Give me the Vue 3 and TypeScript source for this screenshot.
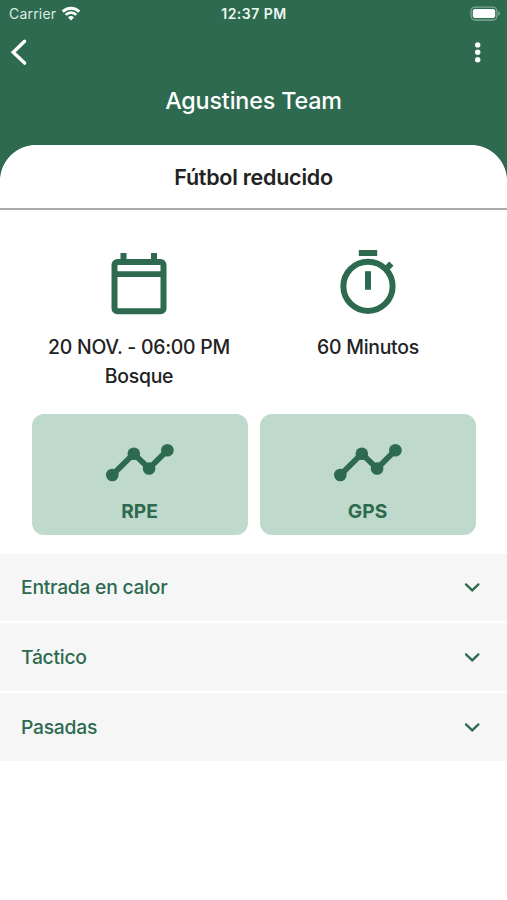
<script setup lang="ts">
import { ref } from 'vue'

interface Metric {
  id: string
  label: string
}

interface Section {
  id: string
  title: string
}

const metrics: Metric[] = [
  { id: 'rpe', label: 'RPE' },
  { id: 'gps', label: 'GPS' },
]

const sections: Section[] = [
  { id: 'warmup', title: 'Entrada en calor' },
  { id: 'tactics', title: 'Táctico' },
  { id: 'runs', title: 'Pasadas' },
]

const selected = ref<string | null>(null)
</script>

<template>
  <div class="screen">
    <header class="header">
      <div class="status">
        <div class="carrier">
          <span class="carrier-name">Carrier</span>
          <svg class="wifi" width="20" height="16" viewBox="61 5.5 20 16">
            <path d="M62.7 11.1a11.8 11.8 0 0 1 16.6 0" fill="none" stroke="#fff" stroke-width="2.9" />
            <path d="M65.7 14.4a7.5 7.5 0 0 1 10.6 0" fill="none" stroke="#fff" stroke-width="2.7" />
            <path d="M71 20l-3-3.1a4.3 4.3 0 0 1 6 0z" fill="#fff" />
          </svg>
        </div>
        <span class="clock">12:37 PM</span>
        <svg class="battery" width="32" height="16" viewBox="470 5.5 32 16">
          <rect x="471" y="6.7" width="26" height="12.8" rx="4" fill="none" stroke="#7fa892" stroke-width="1.3" />
          <rect x="472.8" y="8.6" width="22.4" height="9" rx="2" fill="#fff" />
          <path d="M498.4 10.8c2.2.7 2.2 3.8 0 4.5z" fill="#7fa892" />
        </svg>
      </div>
      <nav class="nav">
        <button class="icon-button" aria-label="Volver">
          <svg width="20" height="30" viewBox="9 37 20 30">
            <path d="M24.6 41.2L13.2 52.3l11.4 10.8" fill="none" stroke="#fff" stroke-width="3.4" stroke-linecap="round" />
          </svg>
        </button>
        <button class="icon-button" aria-label="Opciones">
          <svg width="8" height="24" viewBox="0 0 8 24">
            <circle cx="3.7" cy="4.9" r="2.7" fill="#fff" />
            <circle cx="3.7" cy="12.3" r="2.7" fill="#fff" />
            <circle cx="3.7" cy="19.7" r="2.7" fill="#fff" />
          </svg>
        </button>
      </nav>
      <h1 class="team">Agustines Team</h1>
      <div class="sheet-top">
        <h2 class="session">Fútbol reducido</h2>
      </div>
    </header>

    <section class="details">
      <div class="detail">
        <svg width="70" height="70" viewBox="104.5 248 70 70">
          <path d="M121 253h6v8h-6zM151.5 253h6v8h-6z" fill="#2d6a4f" />
          <rect x="115" y="262" width="49" height="49.2" rx="2.8" fill="none" stroke="#2d6a4f" stroke-width="6" />
          <path d="M115 274.2h49" stroke="#2d6a4f" stroke-width="5.8" />
        </svg>
        <span class="line">20 NOV. - 06:00 PM</span>
        <span class="line">Bosque</span>
      </div>
      <div class="detail">
        <svg width="70" height="70" viewBox="333 248 70 70">
          <circle cx="368" cy="286.3" r="24.6" fill="none" stroke="#2d6a4f" stroke-width="6" />
          <path d="M358.8 250h18.4v6h-18.4zM365 271.2h6v18.5h-6z" fill="#2d6a4f" />
          <path d="M384.8 270.2l6.6-6.6" stroke="#2d6a4f" stroke-width="6" />
        </svg>
        <span class="line">60 Minutos</span>
      </div>
    </section>

    <section class="metrics">
      <button v-for="metric in metrics" :key="metric.id" class="metric">
        <svg width="70" height="40" viewBox="104.9 443 70 40">
          <path d="M112.2 475l21.5-21.3L149 468.5l18.3-18.2" fill="none" stroke="#2d6a4f" stroke-width="5.8" />
          <g fill="#2d6a4f">
            <circle cx="112.2" cy="475" r="6.3" />
            <circle cx="133.7" cy="453.7" r="6.3" />
            <circle cx="149" cy="468.5" r="6.3" />
            <circle cx="167.3" cy="450.3" r="6.3" />
          </g>
        </svg>
        <span class="metric-label">{{ metric.label }}</span>
      </button>
    </section>

    <section class="accordion">
      <button
        v-for="section in sections"
        :key="section.id"
        class="row"
        :aria-expanded="selected === section.id"
        @click="selected = selected === section.id ? null : section.id"
      >
        <span class="row-title">{{ section.title }}</span>
        <svg width="18" height="14" viewBox="0 0 18 14">
          <path d="M3 4.4L9.2 10.4l6.2-6" fill="none" stroke="#2d6a4f" stroke-width="2.3" stroke-linecap="round" />
        </svg>
      </button>
    </section>
  </div>
</template>

<style>
body {
  margin: 0;
  background: #fff;
}
</style>

<style scoped>
.screen {
  width: 507px;
  height: 900px;
  overflow: hidden;
  background: #fff;
  color: #222;
  font-family: Inter, Roboto, sans-serif;
}

svg {
  display: block;
  flex: none;
}

button {
  border: 0;
  padding: 0;
  margin: 0;
  background: none;
  font: inherit;
  color: inherit;
}

.header {
  background: #2d6a4f;
  color: #fff;
}

.status {
  display: grid;
  grid-template-columns: 1fr auto 1fr;
  align-items: center;
  height: 27px;
  padding: 0 5px 0 9px;
  box-sizing: border-box;
}

.carrier {
  display: flex;
  align-items: center;
  gap: 5px;
  font-size: 14px;
  letter-spacing: 0.2px;
  color: #dcebe3;
}

.clock {
  margin-right: 3px;
  font-size: 14px;
  font-weight: 600;
  letter-spacing: 0.5px;
  color: #eef6f1;
}

.battery {
  justify-self: end;
}

.nav {
  display: flex;
  justify-content: space-between;
  align-items: center;
  height: 49px;
  padding: 0 25px 0 9px;
}

.team {
  margin: 0;
  height: 69px;
  line-height: 50px;
  font-size: 23.3px;
  font-weight: 500;
  letter-spacing: -0.15px;
  text-align: center;
}

.sheet-top {
  height: 65px;
  box-sizing: border-box;
  border-bottom: 2px solid #aaa;
  background: radial-gradient(circle at 36px 36px, #fff 35.6px, transparent 36.4px) 0 0 / 36px 36px no-repeat,
    radial-gradient(circle at 0 36px, #fff 35.6px, transparent 36.4px) 100% 0 / 36px 36px no-repeat,
    linear-gradient(#fff, #fff) 36px 0 / 435px 36px no-repeat,
    linear-gradient(#fff, #fff) 0 36px / 100% 30px no-repeat;
}

.session {
  margin: 0;
  line-height: 64px;
  font-size: 21.5px;
  font-weight: 600;
  letter-spacing: -0.25px;
  text-align: center;
  color: #222;
}

.details {
  display: grid;
  grid-template-columns: 229px 229px;
  padding: 38px 25px 0 24.5px;
  height: 204px;
  box-sizing: border-box;
}

.detail {
  display: flex;
  flex-direction: column;
  align-items: center;
}

.detail svg {
  margin-bottom: 14.5px;
}

.line {
  line-height: 29px;
  font-size: 19.4px;
  font-weight: 500;
  letter-spacing: -0.25px;
  white-space: nowrap;
}

.metrics {
  display: grid;
  grid-template-columns: 216px 216px;
  gap: 12px;
  padding: 0 31px 0 32px;
}

.metric {
  display: flex;
  flex-direction: column;
  align-items: center;
  box-sizing: border-box;
  height: 121px;
  padding-top: 29px;
  border-radius: 12px;
  background: #bfd9cc;
  color: #2d6a4f;
}

.metric-label {
  margin-top: 14px;
  margin-right: 1px;
  line-height: 28px;
  font-size: 19.2px;
  font-weight: 700;
}

.accordion {
  display: flex;
  flex-direction: column;
  gap: 2px;
  margin-top: 18.5px;
}

.row {
  display: flex;
  align-items: center;
  justify-content: space-between;
  height: 67.7px;
  padding: 0 26px 0 21px;
  background: #f6f6f6;
  color: #2d6a4f;
}

.row-title {
  font-size: 19.3px;
  font-weight: 500;
  letter-spacing: -0.25px;
}
</style>
